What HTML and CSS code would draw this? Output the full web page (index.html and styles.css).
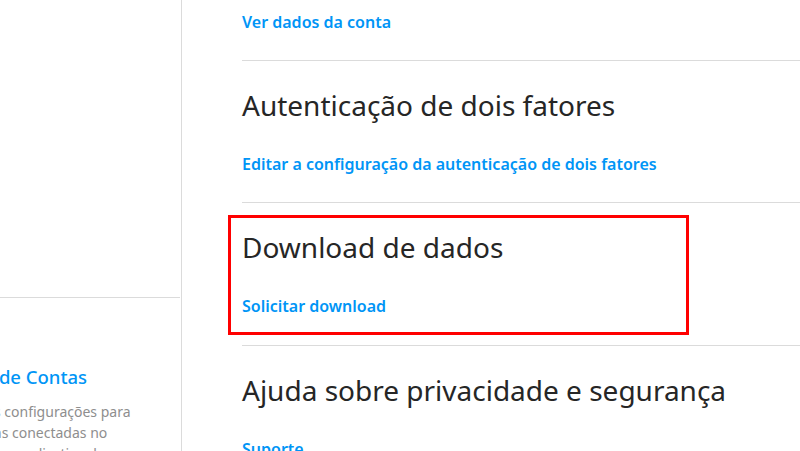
FILE: index.html
```html
<!DOCTYPE html>
<html lang="pt-BR">
<head>
    <meta charset="UTF-8">
    <meta name="viewport" content="width=device-width, initial-scale=1.0">
    <title>Privacidade e segurança</title>
    <link rel="stylesheet" href="styles.css">
</head>
<body>
    <div class="page">
        <aside class="sidebar">
            <div class="sidebar-top"></div>
            <div class="accounts">
                <div class="accounts-inner">
                    <a class="accounts-title" href="#">Central de Contas</a>
                    <p class="accounts-text">Controle as configurações para<br>experiências conectadas no<br>Instagram, no aplicativo do</p>
                </div>
            </div>
        </aside>
        <main class="content">
            <section class="block first">
                <a class="link" href="#">Ver dados da conta</a>
            </section>
            <section class="block">
                <h2>Autenticação de dois fatores</h2>
                <a class="link" href="#">Editar a configuração da autenticação de dois fatores</a>
            </section>
            <section class="block marked">
                <h2>Download de dados</h2>
                <a class="link" href="#">Solicitar download</a>
                <div class="highlight"></div>
            </section>
            <section class="block">
                <h2>Ajuda sobre privacidade e segurança</h2>
                <a class="link" href="#">Suporte</a>
            </section>
        </main>
    </div>
</body>
</html>
```

FILE: styles.css
```css
body {
    margin: 0;
    font-family: "Noto Sans", "Open Sans", sans-serif;
    background-color: #fff;
    color: #262626;
    overflow: hidden;
}
.page {
    display: flex;
    height: 451px;
    overflow: hidden;
}
.sidebar {
    width: 181px;
    flex-shrink: 0;
    border-right: 1px solid #dbdbdb;
    overflow: hidden;
}
.sidebar-top {
    height: 297px;
    border-bottom: 1px solid #dbdbdb;
    margin-right: 1px;
}
.accounts {
    padding-top: 66px;
}
.accounts-inner {
    margin-left: -70px; /* la columna está desplazada a la izquierda */
    white-space: nowrap;
}
.accounts-title {
    display: block;
    color: #0095f6;
    font-size: 18.5px;
    font-weight: 500;
    text-decoration: none;
}
.accounts-text {
    margin: 12px 0 0 -4px;
    color: #8e8e8e;
    font-size: 14px;
    line-height: 21px;
}
.content {
    flex: 1;
    padding-left: 60px;
}
.block {
    border-top: 1px solid #dbdbdb;
    height: 142px;
    box-sizing: border-box;
    padding-top: 24px;
    position: relative;
}
.block.first {
    border-top: none;
    height: 60px;
    padding-top: 10px;
}
.block.marked {
    height: 143px;
}
h2 {
    margin: 0 0 27px;
    font-size: 28px;
    font-weight: 400;
    line-height: 40px;
}
.link {
    display: block;
    color: #0095f6;
    font-size: 16px;
    font-weight: 600;
    text-decoration: none;
    line-height: 24px;
}
.highlight {
    position: absolute;
    left: -14px;
    top: 12px;
    width: 455px;
    height: 114px;
    border: 3px solid #f00;
}
```
